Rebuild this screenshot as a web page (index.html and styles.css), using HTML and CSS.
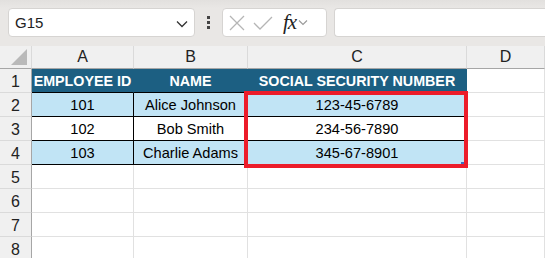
FILE: index.html
```html
<!DOCTYPE html>
<html>
<head>
<meta charset="UTF-8">
<title>Employees</title>
<link rel="stylesheet" href="styles.css">
</head>
<body>

<!-- FORMULA BAR -->
<div class="bar">
  <div class="namebox">
    <span>G15</span>
    <svg class="chev" width="12" height="8" viewBox="0 0 12 8"><path d="M1 1.5l5 5 5-5" fill="none" stroke="#333" stroke-width="1.3"/></svg>
  </div>
  <div class="dots"><i></i><i></i><i></i></div>
  <div class="fxbox">
    <svg width="18" height="18" viewBox="0 0 18 18"><path d="M2 2l14 14M16 2L2 16" stroke="#b5b5b5" stroke-width="1.3"/></svg>
    <svg width="20" height="18" viewBox="0 0 20 18"><path d="M1 9l6 6L19 3" fill="none" stroke="#b5b5b5" stroke-width="1.3"/></svg>
    <span class="fx">fx</span>
    <svg width="10" height="7" viewBox="0 0 10 7"><path d="M1 1.5l4 4 4-4" fill="none" stroke="#999" stroke-width="1.1"/></svg>
  </div>
  <div class="formula"></div>
</div>

<!-- SHEET -->
<div class="sheet">
  <div class="grid">
    <div class="corner"><b></b></div>
    <div class="colhd">A</div>
    <div class="colhd">B</div>
    <div class="colhd">C</div>
    <div class="colhd">D</div>

    <div class="rowhd">1</div>
    <div class="c th">EMPLOYEE ID</div>
    <div class="c th">NAME</div>
    <div class="c th">SOCIAL SECURITY NUMBER</div>
    <div class="c"></div>

    <div class="rowhd">2</div>
    <div class="c td band">101</div>
    <div class="c td band">Alice Johnson</div>
    <div class="c td band">123-45-6789</div>
    <div class="c"></div>

    <div class="rowhd">3</div>
    <div class="c td">102</div>
    <div class="c td">Bob Smith</div>
    <div class="c td">234-56-7890</div>
    <div class="c"></div>

    <div class="rowhd">4</div>
    <div class="c td band">103</div>
    <div class="c td band">Charlie Adams</div>
    <div class="c td band">345-67-8901</div>
    <div class="c"></div>

    <div class="rowhd">5</div><div class="c"></div><div class="c"></div><div class="c"></div><div class="c"></div>
    <div class="rowhd">6</div><div class="c"></div><div class="c"></div><div class="c"></div><div class="c"></div>
    <div class="rowhd">7</div><div class="c"></div><div class="c"></div><div class="c"></div><div class="c"></div>
    <div class="rowhd">8</div><div class="c"></div><div class="c"></div><div class="c"></div><div class="c"></div>
  </div>

  <!-- highlight round column C data -->
  <div class="mark"><span class="handle"></span></div>
</div>

</body>
</html>
```

FILE: styles.css
```css
body{
  margin:0; width:545px; height:258px; overflow:hidden;
  font-family:"Liberation Sans",Arial,sans-serif; color:#000;
  background:#fff;
}

/* formula bar */
.bar{
  height:46px; box-sizing:border-box;
  display:flex; align-items:center;
  padding:0 0 1px 8px; gap:0;
  background:linear-gradient(#e2e0de,#e9e7e5 8px,#e9e7e5);
}
.namebox{
  width:187px; height:29px; box-sizing:border-box;
  background:#fff; border:1px solid #d6d4d2; border-radius:4px;
  display:flex; align-items:center; justify-content:space-between;
  padding:0 6px 0 6px; font-size:15px; color:#222;
}
.chev{margin-top:2px}
.dots{
  width:27px; display:flex; flex-direction:column; align-items:center; gap:2px;
}
.dots i{width:3px;height:3px;background:#444;display:block}
.fxbox{
  width:105px; height:29px; box-sizing:border-box;
  background:#fff; border:1px solid #d6d4d2; border-radius:4px;
  display:flex; align-items:center; padding:0 4px 0 5px; gap:7px;
}
.fx{
  font-family:"Liberation Serif",serif; font-style:italic; font-size:21px;
  color:#222; margin-left:3px; margin-right:-5px; letter-spacing:-1px;
}
.formula{
  flex:1; height:29px; box-sizing:border-box; margin-left:7px;
  background:#fff; border:1px solid #d6d4d2; border-right:none;
  border-radius:4px 0 0 4px;
}

/* sheet grid */
.sheet{position:relative}
.grid{
  display:grid;
  grid-template-columns:32px 102px 114px 219px 1fr;
  grid-template-rows:23px repeat(8,24px);
}
.grid > div{box-sizing:border-box}
.corner{
  position:relative; background:#f0f0f0;
  border-right:1px solid #dadada; border-bottom:1px solid #a6a6a6;
}
.corner b{
  position:absolute; right:4px; bottom:3px; width:0; height:0;
  border-left:16px solid transparent; border-bottom:16px solid #b9b9b9;
}
.colhd{
  background:#f0f0f0; font-size:16px; color:#222;
  display:flex; align-items:center; justify-content:center;
  border-right:1px solid #dadada; border-bottom:1px solid #a6a6a6;
}
.rowhd{
  background:#f0f0f0; font-size:16px; color:#222;
  display:flex; align-items:center; justify-content:center; padding-top:2px;
  border-right:1px solid #a6a6a6; border-bottom:1px solid #dadada;
}
.c{
  border-right:1px solid #e1e1e1; border-bottom:1px solid #e1e1e1;
  display:flex; align-items:center; justify-content:center;
  font-size:14.6px; white-space:nowrap; overflow:hidden; padding-top:1px;
}
.th{
  background:#1c5f82; color:#fff; font-weight:bold; font-size:14.3px;
  border-right:1px solid #1c5f82; border-bottom:1px solid #000;
}
.td{border-right:1px solid #000; border-bottom:1px solid #000}
.band{background:#c1e4f5}

.mark{
  position:absolute; left:244px; top:45px; width:224px; height:77px;
  box-sizing:border-box; border:4px solid #ec1c2a;
}
.handle{
  position:absolute; right:0; bottom:0; width:3px; height:2px; background:#3b6fc2;
}
```
